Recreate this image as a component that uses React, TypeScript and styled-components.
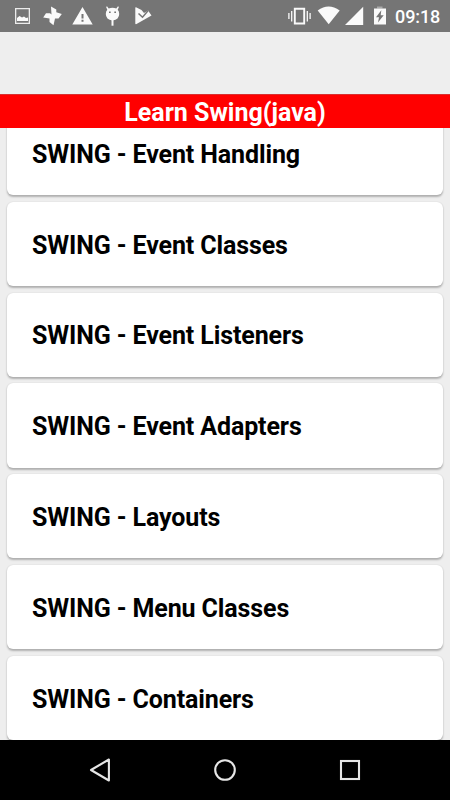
import React from "react";
import styled, { createGlobalStyle } from "styled-components";

const GlobalStyle = createGlobalStyle`
  * { box-sizing: border-box; }
  body { margin: 0; background: #eeeeee; font-family: Roboto, sans-serif; }
`;

const Screen = styled.div`
  display: flex;
  flex-direction: column;
  width: 450px;
  height: 800px;
  overflow: hidden;
  background: #eeeeee;
`;

const StatusBar = styled.header`
  flex: 0 0 31.5px;
  height: 31.5px;
  display: flex;
  justify-content: space-between;
  background: #757575;
  color: #fff;
`;

const StatusIcons = styled.svg`
  display: block;
  height: 31px;
  fill: #fafafa;
`;

const StatusRight = styled.div`
  display: flex;
`;

const Clock = styled.time`
  width: 55px;
  height: 31px;
  padding-top: 1px;
  font-size: 18px;
  font-weight: 500;
  letter-spacing: -0.1px;
  line-height: 31px;
  white-space: nowrap;
`;

const Spacer = styled.div`
  flex: 0 0 62.5px;
`;

const TitleBar = styled.h1`
  flex: 0 0 34px;
  height: 34px;
  margin: 0;
  background: #ff0000;
  border-top: 1px solid #d83030;
  color: #fff;
  font-size: 25px;
  font-weight: 700;
  line-height: 35px;
  text-align: center;
`;

const TopicList = styled.main`
  flex: 1;
  min-height: 0;
  overflow: hidden;
  display: flex;
  flex-direction: column;
  justify-content: flex-end;
  gap: 6.6px;
  padding: 0 7px;
`;

const TopicCard = styled.article`
  flex: 0 0 84.2px;
  display: flex;
  align-items: center;
  padding: 2.2px 25px 0;
  border-radius: 6px;
  background: #fff;
  box-shadow: 0 1.5px 2px rgba(0, 0, 0, 0.26), 0 0 1.5px rgba(0, 0, 0, 0.08);
  font-size: 25px;
  font-weight: 700;
  letter-spacing: -0.12px;
  color: #000;
`;

const NavBar = styled.nav`
  flex: 0 0 60px;
  display: flex;
  justify-content: center;
  align-items: center;
  gap: 85px;
  background: #000;
`;

const NavIcon = styled.svg`
  width: 40px;
  height: 40px;
  fill: none;
  stroke: #e6e6e6;
  stroke-width: 2.1;
`;

const topics = [
  "Event Handling",
  "Event Classes",
  "Event Listeners",
  "Event Adapters",
  "Layouts",
  "Menu Classes",
  "Containers",
];

export default function App() {
  return (
    <>
      <GlobalStyle />
      <Screen>
        <StatusBar>
          <StatusIcons width="160" viewBox="0 0 160 31">
            <path fillRule="evenodd" d="M15 8h15v16H15zM16.3 9.3v13.4h12.4V9.3z" opacity=".9" />
            <path d="M17 21v-3l2.500-2 2.500 1.500 2-1 2 1.500 2-.500v3.500z" />
            <path d="M51.5 14.500L51 6.500L56.300 9.500V12.300L61.800 14L58.500 18.500H55L53.500 25.200L49.500 22V18.500L43.200 17.500L46 13.200H50z" />
            <path fillRule="evenodd" d="M82.500 7L92.700 24.500H72.300zM81.500 14v4.500h2V14zm0 5.800v2h2v-2z" />
            <path
              fillRule="evenodd"
              d="M107 6.200l1.700 2.300q3.800-1.300 7.600 0l1.700-2.300.9.700-1.200 2.800q1.500 1.600 1.500 4.300 0 5.500-6.700 6.500-6.700-1-6.700-6.500 0-2.700 1.500-4.300l-1.200-2.800zM109 11.400v1.600h1.700v-1.600zm5.300 0v1.600h1.700v-1.600z"
            />
            <path d="M111.500 20h2v5.700h-2z" />
            <path d="M136 7.300L141.500 10L144 13L148 10.500L151.500 15.500L136.500 24Q135 24.500 135.300 23V8Q135.300 7 136 7.300z" />
            <path d="M138.500 13.500l4 3.700 5.500-6.500" fill="none" stroke="#757575" strokeWidth="1.500" />
          </StatusIcons>
          <StatusRight>
            <StatusIcons width="107" viewBox="288 0 107 31">
              <path d="M294.800 8.800h9.400v14.700h-9.400z" fill="none" stroke="#fafafa" strokeWidth="1.900" />
              <path d="M291.700 11v10.500M307.300 11v10.500M288.900 13v6M310.100 13v6" stroke="#fafafa" strokeWidth="1.300" />
              <path d="M317.700 10.500Q328.500 2.500 339.700 10.500L328.700 24.300z" />
              <path d="M345 25L363.200 6.700V25z" />
              <path d="M377 6.500h5.500v2H377z" opacity=".4" />
              <path fillRule="evenodd" d="M374 8.500h12v16H374zM381.300 10.300L376 17.200h3l-1 5.300 5.700-7.300h-3z" />
            </StatusIcons>
            <Clock>09:18</Clock>
          </StatusRight>
        </StatusBar>
        <Spacer />
        <TitleBar>Learn Swing(java)</TitleBar>
        <TopicList>
          {topics.map((topic) => (
            <TopicCard key={topic}>SWING - {topic}</TopicCard>
          ))}
        </TopicList>
        <NavBar>
          <NavIcon viewBox="0 0 40 40">
            <path d="M28.900 9.500V30.500L11 20z" strokeLinejoin="round" />
          </NavIcon>
          <NavIcon viewBox="0 0 40 40">
            <circle cx="20" cy="20" r="9.800" />
          </NavIcon>
          <NavIcon viewBox="0 0 40 40">
            <rect x="11" y="11" width="18" height="18" />
          </NavIcon>
        </NavBar>
      </Screen>
    </>
  );
}
